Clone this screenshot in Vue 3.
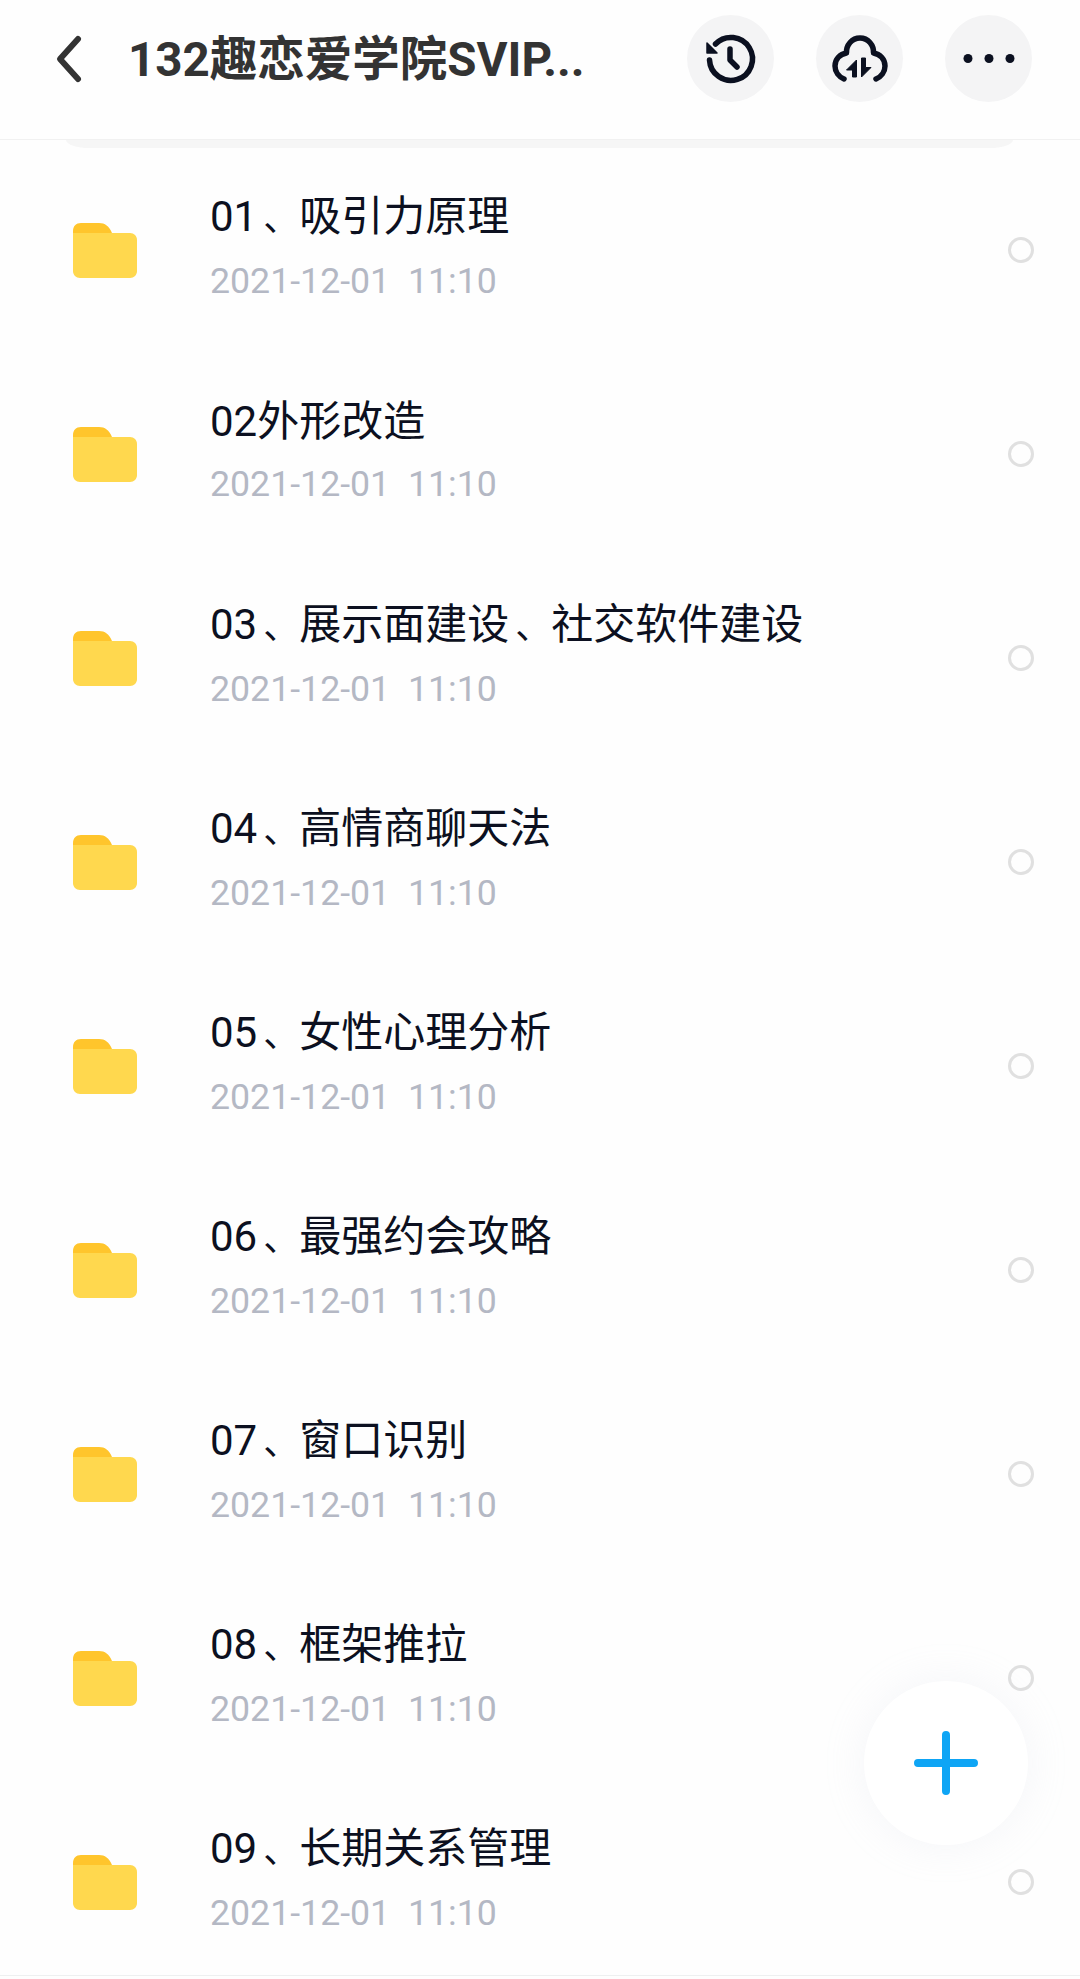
<template>
  <div class="page">
    <header class="topbar">
      <button class="back" aria-label="back">
        <svg width="44" height="60" viewBox="0 0 44 60">
          <path d="M30 10 L12 30 L30 50" fill="none" stroke="#333" stroke-width="6" stroke-linecap="round" stroke-linejoin="round" />
        </svg>
      </button>
      <h1 class="title">132趣恋爱学院SVIP...</h1>
      <div class="actions">
        <span class="round">
          <svg width="87" height="87" viewBox="0 0 87 87">
            <path d="M28.5 29 A21.5 21.5 0 1 1 22.5 45" fill="none" stroke="#0b1020" stroke-width="5.5" stroke-linecap="round" />
            <path d="M20 28 L20 38 L30 38 Z" fill="#0b1020" stroke="#0b1020" stroke-width="1.5" stroke-linejoin="round" />
            <path d="M43 34 L43 45 L50 52" fill="none" stroke="#0b1020" stroke-width="5.5" stroke-linecap="round" stroke-linejoin="round" />
          </svg>
        </span>
        <span class="round">
          <svg width="87" height="87" viewBox="0 0 87 87">
            <path d="M28 64 C23 62 19 57 19 51 C19 44 24 39 30.5 38 C30 30 36 23 44 23 C52 23 58 30 57.5 38 C64 39 69 44 69 51 C69 57 65 62 60 64" fill="none" stroke="#0b1020" stroke-width="5.5" stroke-linecap="round" stroke-linejoin="round" />
            <path d="M40.5 62 L40.5 45 L30.5 55 L36.5 55 L36.5 62 Z" fill="#0b1020" stroke="#0b1020" stroke-width="1" stroke-linejoin="round" />
            <path d="M45.5 43 L45.5 62 L55 52.5 L49.5 52.5 L49.5 43 Z" fill="#0b1020" stroke="#0b1020" stroke-width="1" stroke-linejoin="round" />
          </svg>
        </span>
        <span class="round">
          <svg width="87" height="87" viewBox="0 0 87 87">
            <circle cx="23" cy="43.5" r="4.5" fill="#0b1020" />
            <circle cx="44" cy="43.5" r="4.5" fill="#0b1020" />
            <circle cx="65" cy="43.5" r="4.5" fill="#0b1020" />
          </svg>
        </span>
      </div>
    </header>
    <div class="sliver"></div>

    <ul class="files">
      <li v-for="f in folders" :key="f" class="file">
        <svg class="folder" width="64" height="55" viewBox="0 0 64 55">
          <path d="M0 8 C0 3 3 0 8 0 H26 C32 0 36 3 39 10 H0 Z" fill="#ffc52c" />
          <path d="M0 10 H57 C61 10 64 13 64 17 V48 C64 52 61 55 57 55 H7 C3 55 0 52 0 48 Z" fill="#ffd84e" />
        </svg>
        <div class="meta">
          <div class="name">
            <template v-for="(part, i) in f.split('、')" :key="i"><span v-if="i" class="sep">、</span>{{ part }}</template>
          </div>
          <div class="date">2021-12-01&nbsp;&nbsp;11:10</div>
        </div>
        <span class="radio"></span>
      </li>
    </ul>

    <div class="bottomline"></div>

    <button class="fab" aria-label="add">
      <svg width="64" height="64" viewBox="0 0 64 64">
        <path d="M32 4 V60 M4 32 H60" fill="none" stroke="#0ea5f5" stroke-width="8" stroke-linecap="round" />
      </svg>
    </button>
  </div>
</template>

<script setup>
const folders = [
  '01、吸引力原理',
  '02外形改造',
  '03、展示面建设、社交软件建设',
  '04、高情商聊天法',
  '05、女性心理分析',
  '06、最强约会攻略',
  '07、窗口识别',
  '08、框架推拉',
  '09、长期关系管理',
];
</script>

<style>
html, body {
  margin: 0;
  background: #fefefe;
}
</style>

<style scoped>
.page {
  position: relative;
  width: 1080px;
  height: 1979px;
  display: flex;
  flex-direction: column;
  overflow: hidden;
  background: #fefefe;
  font-family: Roboto, "Noto Sans CJK SC", sans-serif;
}
.topbar {
  flex: none;
  height: 140px;
  display: flex;
  align-items: center;
  padding: 0 48px 22px 48px;
  box-sizing: border-box;
  border-bottom: 1px solid #f1f1f1;
}
.back {
  width: 44px;
  height: 60px;
  padding: 0;
  border: 0;
  background: none;
  flex: none;
}
.back svg {
  display: block;
}
.title {
  flex: 1;
  margin: 2px 0 0 36px;
  font-size: 47.5px;
  line-height: 60px;
  font-weight: 700;
  color: #333;
  white-space: nowrap;
}
.actions {
  display: flex;
  gap: 42px;
}
.round {
  width: 87px;
  height: 87px;
  border-radius: 50%;
  background: #f4f4f5;
}
.round svg {
  display: block;
}
.sliver {
  flex: none;
  height: 8px;
  margin: 0 67px 0 66px;
  background: #f6f6f6;
  border-radius: 0 0 24px 24px / 0 0 8px 8px;
}
.files {
  flex: 1;
  min-height: 0;
  overflow: hidden;
  list-style: none;
  margin: 0;
  padding: 0;
}
.file {
  height: 204px;
  display: flex;
  align-items: center;
  padding: 0 46px 0 73px;
}
.folder {
  flex: none;
}
.meta {
  flex: 1;
  margin: 0 0 2px 73px;
}
.name {
  font-size: 42px;
  line-height: 56px;
  color: #0c1020;
  white-space: nowrap;
}
.sep {
  margin-left: 6px;
  font-size: 36px;
}
.date {
  margin-top: 6px;
  font-size: 35.7px;
  line-height: 56px;
  color: #b4b8c4;
  white-space: nowrap;
}
.radio {
  flex: none;
  width: 26px;
  height: 26px;
  box-sizing: border-box;
  border: 3px solid #e0e0e0;
  border-radius: 50%;
}
.bottomline {
  flex: none;
  height: 4px;
  border-top: 1px solid #eef0f0;
  box-sizing: border-box;
}
.fab {
  position: absolute;
  left: 864px;
  top: 1681px;
  width: 164px;
  height: 164px;
  padding: 0;
  border: 0;
  border-radius: 50%;
  background: #fff;
  box-shadow: 0 0 40px rgba(200, 205, 220, 0.18);
  display: flex;
  align-items: center;
  justify-content: center;
}
.fab svg {
  display: block;
}
</style>
